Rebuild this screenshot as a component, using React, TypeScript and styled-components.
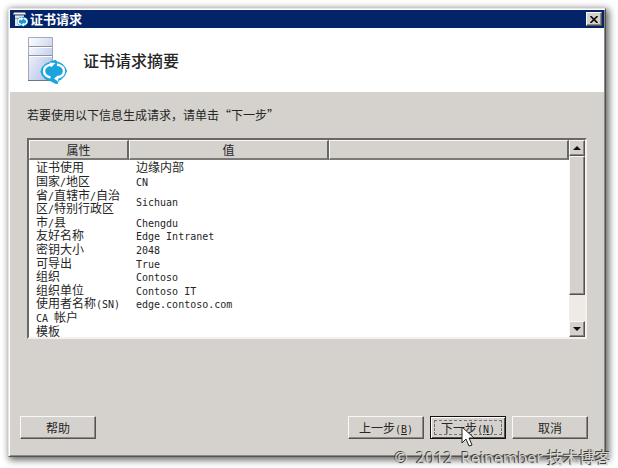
import React from "react";
import styled, { createGlobalStyle, css } from "styled-components";

const Global = createGlobalStyle`
  * { box-sizing: border-box; }
  body {
    margin: 0;
    background: #fff;
    color: #262626;
    font: 12px/14px "Noto Sans CJK SC", sans-serif;
  }
`;

const raised = css`
  border: 1px solid;
  border-color: #f8f8f6 #55534f #55534f #f8f8f6;
  box-shadow: inset -1px -1px #8c8984;
`;

const Desktop = styled.main`
  position: relative;
  display: flex;
  min-height: 100vh;
  padding: 8px 12px 11px 8px;
`;

const Dialog = styled.section`
  flex: 1;
  display: flex;
  flex-direction: column;
  padding: 1px;
  background: #d5d2cd;
  border: 1px solid;
  border-color: #e4e2de #55534f #55534f #e4e2de;
  box-shadow: inset 1px 1px #fff, inset -1px -1px #8c8984,
    2px 2px 7px 1px rgba(0, 0, 0, 0.6);
`;

const TitleBar = styled.header`
  display: flex;
  align-items: center;
  gap: 2px;
  height: 18px;
  padding: 0 2px 0 3px;
  background: #04246a;
  color: #fff;
`;

const Title = styled.h1`
  flex: 1;
  margin: 0;
  font-size: 13px;
  font-weight: 700;
  line-height: 18px;
`;

const CloseButton = styled.button`
  ${raised}
  display: grid;
  place-items: center;
  width: 16px;
  height: 14px;
  padding: 0;
  background: #d5d2cd;
`;

const Banner = styled.div`
  display: flex;
  align-items: center;
  gap: 16px;
  height: 64px;
  padding: 0 17px;
  background: #fff;
`;

const Heading = styled.h2`
  margin: 0;
  font-size: 16px;
  font-weight: 500;
  line-height: 20px;
`;

const Body = styled.div`
  flex: 1;
  display: flex;
  flex-direction: column;
  padding: 16px 17px 0;
`;

const Hint = styled.p`
  margin: 0 0 16px;
`;

const ListBox = styled.div`
  display: flex;
  height: 201px;
  overflow: hidden;
  background: #fff;
  border: 2px solid;
  border-color: #6a6864 #f2f1ee #f2f1ee #6a6864;
`;

const ListView = styled.div`
  flex: 1;
  overflow: hidden;
`;

const Table = styled.table`
  width: 100%;
  height: 197px;
  table-layout: fixed;
  border-collapse: separate;
  border-spacing: 0;
`;

const Head = styled.th<{ $width?: number }>`
  width: ${(p) => (p.$width ? `${p.$width}px` : "auto")};
  height: 20px;
  padding: 0;
  background: #d5d2cd;
  border: solid;
  border-width: 1px 2px 2px 1px;
  border-color: #f8f8f6 #6a6864 #7c7a76 #f8f8f6;
  font-weight: 400;
`;

const Cell = styled.td`
  padding: 0 4px 0 7px;
  line-height: 13px;
  vertical-align: middle;
`;

const Latin = styled.span`
  font-family: "DejaVu Sans Mono", monospace;
  font-size: 10px;
  line-height: 0;
`;

const Scrollbar = styled.div`
  display: flex;
  flex-direction: column;
  width: 16px;
  background: #eeebe7;
`;

const ScrollButton = styled.button`
  ${raised}
  display: grid;
  place-items: center;
  height: 16px;
  padding: 0;
  background: #d5d2cd;
`;

const Thumb = styled.div`
  ${raised}
  height: 139px;
  background: #d5d2cd;
`;

const Spacer = styled.div`
  flex: 1;
`;

const Footer = styled.footer`
  display: flex;
  gap: 6px;
  padding: 0 16px 16px 10px;
`;

const Button = styled.button<{ $primary?: boolean }>`
  ${raised}
  position: relative;
  width: 76px;
  height: 23px;
  padding: 0;
  background: #d5d2cd;
  color: #262626;
  font: inherit;
  ${(p) =>
    p.$primary &&
    css`
      border-color: #111;
      box-shadow: inset 1px 1px #fff, inset -1px -1px #55534f;
      &::after {
        content: "";
        position: absolute;
        inset: 3px;
        border: 1px dashed #77746f;
      }
    `}
`;

const Pointer = styled.svg`
  position: absolute;
  z-index: 1;
  left: 30px;
  top: 9px;
`;

const Watermark = styled.div`
  position: absolute;
  right: 7px;
  bottom: 0;
  color: #d8d5d1;
  font: 16px/20px "Open Sans", "Noto Sans CJK SC", sans-serif;
  white-space: pre;
  text-shadow: -1px -1px #3f3e3c;
`;

const rows: [string, string][] = [
  ["证书使用", "边缘内部"],
  ["国家/地区", "CN"],
  ["省/直辖市/自治区/特别行政区", "Sichuan"],
  ["市/县", "Chengdu"],
  ["友好名称", "Edge Intranet"],
  ["密钥大小", "2048"],
  ["可导出", "True"],
  ["组织", "Contoso"],
  ["组织单位", "Contoso IT"],
  ["使用者名称(SN)", "edge.contoso.com"],
  ["CA 帐户", ""],
  ["模板", ""],
];

function Mixed({ text }: { text: string }) {
  return (
    <>
      {text
        .split(/([\x20-\x7e]+)/)
        .filter(Boolean)
        .map((part, i) =>
          /^[\x20-\x7e]/.test(part) ? <Latin key={i}>{part}</Latin> : part
        )}
    </>
  );
}

function ServerIcon() {
  return (
    <svg width="40" height="48" viewBox="0 0 40 48" aria-hidden="true">
      <defs>
        <linearGradient id="case" x1="0" y1="0" x2="1" y2="1">
          <stop offset="0" stopColor="#fff" />
          <stop offset="1" stopColor="#a9bce6" />
        </linearGradient>
      </defs>
      <path d="M1.500 1.500h24v43h-24z" fill="url(#case)" stroke="#a5a9b4" />
      <path d="M2 10.500h23M2 19.500h23" stroke="#8d929e" />
      <path d="M2 11.500h23M2 20.500h23" stroke="#fff" />
      <path d="M1 44.500h25" stroke="#6c7590" />
      <path
        d="M23 25.500l6-1 1 1.500c5 1 8 4 9.500 9-1.500 5-4 8-8 9.500l-1.500 3.500-7-3.500c-5-1-8-4-9-9 1-5 4-8 9-9z"
        fill="#1aa3dc"
        stroke="#1aa3dc"
        strokeLinejoin="round"
      />
      <path
        d="M24 28.500c-4.500 1-7 3.500-7 6.500s2.500 5.500 6.500 6.500M30 28.500c4.500 1 7 3.500 7 6.500s-2.500 5.500-6 6.500"
        fill="none"
        stroke="#fff"
        strokeWidth="2.400"
      />
      <path d="M22.500 26.500l6 .5-4.500 4.500zM31.500 39l-4.500 3.500 4 3z" fill="#fff" />
    </svg>
  );
}

function SmallServerIcon() {
  return (
    <svg width="15" height="16" viewBox="0 0 15 16" aria-hidden="true">
      <path d="M1 1.500h11l1 2H0z" fill="#f4efe6" />
      <path d="M2 4h9v11H2z" fill="#dfe3ec" />
      <path d="M2 4.500h9M2 7.500h6" stroke="#9a9690" />
      <ellipse cx="9.500" cy="10.500" rx="5.500" ry="4.800" fill="#1b9ad6" />
      <path
        d="M8 7.500c-4 1-4 5 0 6M11 7.500c4 1 4 5 0 6"
        fill="none"
        stroke="#fff"
        strokeWidth="1.400"
      />
      <path d="M8 6l3 1.500-3 2zM11 12l-3 1.500 3 2z" fill="#fff" />
    </svg>
  );
}

function Arrow({ down }: { down?: boolean }) {
  return (
    <svg width="8" height="4" viewBox="0 0 8 4" aria-hidden="true">
      <path d={down ? "M0 0h8L4 4z" : "M0 4h8L4 0z"} fill="#111" />
    </svg>
  );
}

export default function App() {
  return (
    <Desktop lang="zh-CN">
      <Global />
      <Dialog role="dialog" aria-labelledby="dialog-title">
        <TitleBar>
          <SmallServerIcon />
          <Title id="dialog-title">证书请求</Title>
          <CloseButton aria-label="关闭">
            <svg width="8" height="7" viewBox="0 0 8 7">
              <path d="M0.500 0l7 7M7.500 0l-7 7" stroke="#111" strokeWidth="1.600" />
            </svg>
          </CloseButton>
        </TitleBar>
        <Banner>
          <ServerIcon />
          <Heading>证书请求摘要</Heading>
        </Banner>
        <Body>
          <Hint>若要使用以下信息生成请求，请单击“下一步”</Hint>
          <ListBox>
            <ListView>
              <Table>
                <thead>
                  <tr>
                    <Head $width={100}>属性</Head>
                    <Head $width={200}>值</Head>
                    <Head aria-label="空列" />
                  </tr>
                </thead>
                <tbody>
                  {rows.map(([name, value]) => (
                    <tr key={name}>
                      <Cell>
                        <Mixed text={name} />
                      </Cell>
                      <Cell>
                        <Mixed text={value} />
                      </Cell>
                      <Cell />
                    </tr>
                  ))}
                </tbody>
              </Table>
            </ListView>
            <Scrollbar>
              <ScrollButton aria-label="向上滚动">
                <Arrow />
              </ScrollButton>
              <Thumb />
              <Spacer />
              <ScrollButton aria-label="向下滚动">
                <Arrow down />
              </ScrollButton>
            </Scrollbar>
          </ListBox>
        </Body>
        <Footer>
          <Button>帮助</Button>
          <Spacer />
          <Button>
            上一步<Latin>(<u>B</u>)</Latin>
          </Button>
          <Button $primary>
            下一步<Latin>(<u>N</u>)</Latin>
            <Pointer width="14" height="22" viewBox="0 0 14 22" aria-hidden="true">
              <path
                d="M1 1v16l4-4 3 7 3-1-3-7h5z"
                fill="#fff"
                stroke="#222"
                strokeLinejoin="round"
              />
            </Pointer>
          </Button>
          <Button>取消</Button>
        </Footer>
      </Dialog>
      <Watermark>©  2012  Reinember 技术博客</Watermark>
    </Desktop>
  );
}
